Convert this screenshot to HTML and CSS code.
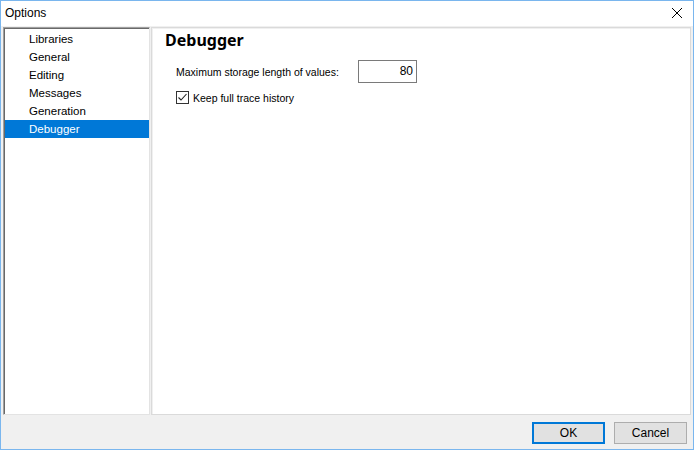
FILE: index.html
```html
<!DOCTYPE html>
<html>
<head>
<meta charset="utf-8">
<link rel="stylesheet" href="styles.css">
</head>
<body>
<div class="window">
  <div class="titlebar">
    <span class="title">Options</span>
    <svg class="close" width="12" height="12" viewBox="0 0 12 12"><path d="M1 1L11 11M11 1L1 11" stroke="#000" stroke-width="1" fill="none"/></svg>
  </div>
  <div class="main">
    <ul class="list">
      <li>Libraries</li>
      <li>General</li>
      <li>Editing</li>
      <li>Messages</li>
      <li>Generation</li>
      <li class="sel">Debugger</li>
    </ul>
    <div class="panel">
      <h1 class="heading">Debugger</h1>
      <div class="row">
        <span class="label">Maximum storage length of values:</span>
        <div class="input">80</div>
      </div>
      <div class="check-row">
        <span class="checkbox"><svg width="11" height="11" viewBox="0 0 11 11"><path d="M1.5 5.5L4 8L9.5 2" stroke="#222" stroke-width="1.1" fill="none"/></svg></span>
        <span class="label">Keep full trace history</span>
      </div>
    </div>
  </div>
  <div class="footer">
    <button class="btn default">OK</button>
    <button class="btn">Cancel</button>
  </div>
</div>
</body>
</html>
```
FILE: styles.css
```css
html, body {
  margin: 0;
  padding: 0;
  background: #f0f0f0;
}
.window {
  width: 694px;
  height: 450px;
  box-sizing: border-box;
  border: 1px solid #7ab6ee;
  background: #f0f0f0;
  display: flex;
  flex-direction: column;
  font-family: "Liberation Sans", Arial, sans-serif;
  font-size: 10.5px;
  color: #000;
}
.titlebar {
  height: 25px;
  background: #fff;
  display: flex;
  align-items: center;
  justify-content: space-between;
  padding: 0 10px 0 4px;
  flex: none;
}
.title {
  font-size: 12px;
  margin-top: -1px;
}
.close {
  margin-top: -1px;
}
.main {
  display: flex;
  gap: 1px;
  padding: 1px 2px 0 2px;
  height: 388px;
  flex: none;
}
.list {
  list-style: none;
  margin: 0;
  padding: 2px 0 0 0;
  width: 147px;
  box-sizing: border-box;
  background: #fff;
  border: 1px solid;
  border-color: #a0a0a0 #e3e3e3 #e3e3e3 #a0a0a0;
  box-shadow: inset 1px 1px 0 #696969;
  font-size: 11.5px;
}
.list li {
  height: 18px;
  line-height: 18px;
  padding-left: 24px;
  margin-left: 1px;
}
.list li.sel {
  background: #0078d7;
  color: #fff;
}
.panel {
  flex: 1;
  background: #fff;
  border: 1px solid #dadada;
  box-shadow: inset 1px 1px 0 #f0f0f0;
  padding: 0 0 0 13px;
}
.heading {
  margin: 1px 0 0 0;
  font-family: "Noto Sans", "Liberation Sans", sans-serif;
  font-size: 16px;
  font-weight: bold;
  height: 22px;
  line-height: 22px;
}
.row {
  display: flex;
  align-items: center;
  margin-top: 9px;
  margin-left: 11px;
}
.row .label {
  width: 182px;
  white-space: nowrap;
}
.input {
  width: 59px;
  height: 23px;
  box-sizing: border-box;
  border: 1px solid #7a7a7a;
  text-align: right;
  padding-right: 3px;
  line-height: 21px;
  font-size: 12px;
}
.check-row {
  display: flex;
  align-items: center;
  margin-top: 8px;
  margin-left: 11px;
  gap: 4px;
}
.check-row .label {
  white-space: nowrap;
}
.checkbox {
  width: 13px;
  height: 13px;
  box-sizing: border-box;
  border: 1px solid #333;
  display: flex;
  align-items: center;
  justify-content: center;
  background: #fff;
}
.footer {
  flex: 1;
  display: flex;
  justify-content: flex-end;
  align-items: flex-start;
  gap: 9px;
  padding: 7px 6px 0 0;
}
.btn {
  width: 73px;
  height: 22px;
  box-sizing: border-box;
  background: #e1e1e1;
  border: 1px solid #adadad;
  font-family: "Liberation Sans", Arial, sans-serif;
  font-size: 12px;
  padding: 0;
  color: #000;
}
.btn.default {
  border: 2px solid #0078d7;
}
```
